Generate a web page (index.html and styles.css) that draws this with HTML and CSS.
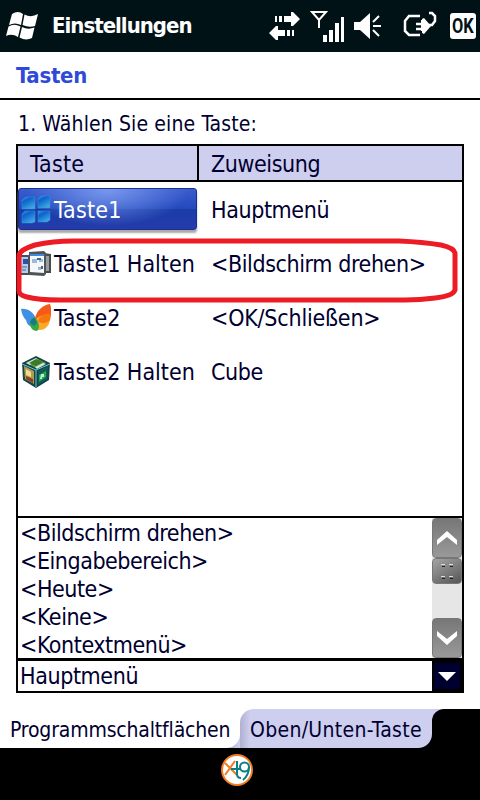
FILE: index.html
```html
<!DOCTYPE html>
<html lang="de">
<head>
  <meta charset="UTF-8" />
  <title>Einstellungen</title>
  <link rel="stylesheet" href="styles.css">
</head>
<body>

  <header class="titlebar">
    <svg class="logo" width="34" height="30" viewBox="0 0 34 30">
      <g fill="#fff">
        <path d="M6 3 Q12 -1 17 3 L15 14 Q9 11 3 14 Z" />
        <path d="M18.500 3.500 Q25 7 32 3 L29 15 Q23 17 16.500 14 Z" />
        <path d="M2.500 15.500 Q8 12 14.500 15.500 L12 26 Q6 22 0 25 Z" />
        <path d="M16 16 Q22 19 28.500 16.500 L26 27 Q20 30 13.500 26.500 Z" />
      </g>
    </svg>
    <h1>Einstellungen</h1>
    <svg class="status" width="222" height="34" viewBox="0 1 222 34">
      <!-- Datenverbindung -->
      <g fill="#fff">
        <path d="M17 8h2v6h-2zM21 8h3v6h-3zM26 8h7V4h2l7 7-7 7h-2v-4h-7z" />
        <path d="M34 22h2v6h-2zM29 22h3v6h-3zM27 22h-7v-4h-2l-7 7 7 7h2v-4h7z" />
      </g>
      <!-- Empfang -->
      <path d="M54 4h14l-7 8zM61 11v9" fill="none" stroke="#fff" stroke-width="2" />
      <path d="M65 27h4v7h-4zM71 22h4v12h-4zM77 15h4v19h-4zM83 9h3v25h-3z" fill="#fff" />
      <!-- Lautsprecher -->
      <path d="M96 14h6l10-9v26l-10-9h-6z" fill="#fff" />
      <path d="M115 14l6-6M115 18h8M115 22l6 6" fill="none" stroke="#fff" stroke-width="2" />
      <!-- Netzteil -->
      <path d="M162 8h-11l-4 5v10l4 4h11M158 16h6M158 21h6M171 5h3l3 3v5l-3 4h-3" fill="none" stroke="#fff" stroke-width="2.500" />
      <path d="M163 12h1v-1l2-1 7 8-7 8-2-1v-2h-1z" fill="#fff" />
    </svg>
    <button class="ok"><span>OK</span></button>
  </header>

  <h2>Tasten</h2>

  <main>
    <p class="step">1. Wählen Sie eine Taste:</p>

    <div class="panel">
      <div class="row head"><span>Taste</span><span>Zuweisung</span></div>
      <div class="list">
        <div class="row">
          <div class="key selected">
            <svg width="30" height="30" viewBox="0 0 30 30">
              <defs>
                <linearGradient id="tile" x1="0" y1="0" x2="0.6" y2="1">
                  <stop offset="0" stop-color="#3a98e6" />
                  <stop offset="0.35" stop-color="#0a62cc" />
                  <stop offset="1" stop-color="#3fa6e0" />
                </linearGradient>
              </defs>
              <g fill="url(#tile)" stroke="#3a93e0" stroke-width=".5">
                <path d="M5 2h9v12H1V5z" /><path d="M20 1h9v12H17V4z" />
                <path d="M4 16h10v11l-3 1H1v-9z" /><path d="M17 16h12v9l-3 2h-9z" />
              </g>
            </svg>
            <span>Taste1</span>
          </div>
          <div class="value">Hauptmenü</div>
        </div>
        <div class="row">
          <div class="key">
            <svg width="30" height="30" viewBox="0 0 30 30">
              <path d="M0 6h8v20H0z" fill="#4b5054" />
              <path d="M0 8h7v16H0z" fill="#b8cbe6" />
              <path d="M2 10h5v5H2z" fill="#2854b0" />
              <path d="M1 18h5M1 21h4" stroke="#456ba8" />
              <path d="M23 4l7 1v19h-7z" fill="#484b4e" />
              <path d="M24 7h4v15h-4z" fill="#9a9da0" />
              <path d="M8 3l15-1 2 2v21l-2 2-15-1z" fill="#505356" />
              <path d="M9 5h14v19l-14-1z" fill="#f4f8fc" />
              <path d="M9 5h14v2H9z" fill="#3e88df" />
              <path d="M11 10h5v4h-5zM18 10h4v3h-4zM17 18h3v3h-3z" fill="#9dbbd8" />
              <path d="M16 9h4v2h-4zM20 17h2v3h-2z" fill="#3a6691" />
              <path d="M18 18h2v1h-2z" fill="#e89030" />
            </svg>
            <span>Taste1 Halten</span>
          </div>
          <div class="value">&lt;Bildschirm drehen&gt;</div>
        </div>
        <div class="row">
          <div class="key">
            <svg width="30" height="30" viewBox="0 0 30 30">
              <path d="M0 6C6 5 13 9 15 16L13 24C8 24 6 21 5 17 2 14 1 11 0 6z" fill="#3f8fe2" />
              <path d="M14 15C16 7 22 2 29 1 31 6 30 13 29 17 23 22 18 19 14 15z" fill="#f4581a" />
              <path d="M14 17C18 12 25 11 29 13 30 21 25 28 17 27z" fill="#fba929" />
              <path d="M17 18C19 12 25 10 29 11L29 17C25 21 20 21 17 18z" fill="#f9760f" />
              <path d="M9 20C10 15 13 13 16 17 19 22 18 26 16 28 12 28 9 25 9 20z" fill="#35a948" />
              <path d="M9 20Q10 15 14 15L16 20 13 23z" fill="#187a83" />
            </svg>
            <span>Taste2</span>
          </div>
          <div class="value wide">&lt;OK/Schließen&gt;</div>
        </div>
        <div class="row">
          <div class="key">
            <svg width="30" height="32" viewBox="0 0 30 32">
              <path d="M15 0l14 7-1 17-13 8L2 24 1 7z" fill="#14434c" />
              <path d="M15 2l10 5-10 5L5 7z" fill="#5d9c38" />
              <path d="M5 7l10-5 2 2-8 5zM14 11l8-4 3 1-9 5z" fill="#d7e6d2" />
              <path d="M8 7l7-4 7 3-7 4z" fill="#397b29" />
              <path d="M3 10l10 5v13L4 23z" fill="#b49b49" />
              <path d="M5 13l5 3v5l-5-2z" fill="#eedc92" />
              <path d="M5 20l7 3v4l-7-4z" fill="#864125" />
              <path d="M17 15l10-5-1 13-9 6z" fill="#105c51" />
              <path d="M18 19l7-4v6l-7 5z" fill="#27a55a" />
              <path d="M20 18h3v3h-2v2h-2z" fill="#b8f5ca" />
              <path d="M1 8l14 6 14-6M15 14v17" fill="none" stroke="#63cbd2" />
            </svg>
            <span>Taste2 Halten</span>
          </div>
          <div class="value">Cube</div>
        </div>
        <svg class="marker" width="444" height="70" viewBox="0 0 444 70">
          <path d="M4 20Q4 14 20 9 38 5 58 5H384Q408 6 426 9 439 12 440 17V54Q438 60 420 62 405 64 390 64H45Q23 64 12 61 4 59 4 55Z" />
        </svg>
      </div>

      <div class="options">
        <ul>
          <li>&lt;Bildschirm drehen&gt;</li>
          <li>&lt;Eingabebereich&gt;</li>
          <li>&lt;Heute&gt;</li>
          <li>&lt;Keine&gt;</li>
          <li>&lt;Kontextmenü&gt;</li>
        </ul>
        <div class="scrollbar">
          <div class="arrow">
            <svg width="20" height="14" viewBox="0 0 20 14"><path d="M0 14V9L10 0l10 9v5L10 6z" /></svg>
          </div>
          <div class="thumb">
            <svg width="12" height="18" viewBox="0 0 12 18">
              <path d="M0 2.500h4M8 2.500h4M0 14.500h4M8 14.500h4" stroke="#ddd" />
              <path d="M1 4.500h3M9 4.500h3M1 16.500h3M9 16.500h3" stroke="#222" />
            </svg>
          </div>
          <div class="arrow down">
            <svg width="20" height="14" viewBox="0 0 20 14"><path d="M0 0v5l10 9 10-9V0L10 8z" /></svg>
          </div>
        </div>
      </div>

      <div class="select">
        <span>Hauptmenü</span>
        <div class="drop"><svg width="18" height="9" viewBox="0 0 18 9"><path d="M0 0h18L9 9z" fill="#fff" /></svg></div>
      </div>
    </div>
  </main>

  <nav class="tabs">
    <div class="tab active">Programmschaltflächen</div>
    <div class="tab">Oben/Unten-Taste</div>
    <div class="rest"></div>
  </nav>

  <footer>
    <svg width="34" height="34" viewBox="0 0 34 34">
      <circle cx="17" cy="17" r="15" fill="#fff" stroke="#f47b20" stroke-width="2" />
      <path d="M5 10l12 12M15 8L5 22" stroke="#f47b20" stroke-width="2" fill="none" />
      <path d="M17 8v13q0 4 4 4M11 16h9" stroke="#087f86" stroke-width="2" fill="none" />
      <circle cx="24.500" cy="14" r="4.500" stroke="#087f86" stroke-width="2" fill="none" />
      <path d="M29 14q0 8-6 13" stroke="#087f86" stroke-width="2" fill="none" />
    </svg>
  </footer>

</body>
</html>
```
FILE: styles.css
```css
* { box-sizing: border-box; }

body {
  margin: 0;
  width: 480px;
  height: 800px;
  overflow: hidden;
  display: flex;
  flex-direction: column;
  background: #fff;
  color: #000030;
  font-family: 'DejaVu Sans Condensed', 'DejaVu Sans', sans-serif;
  font-stretch: condensed;
  font-size: 23px;
}

h1, h2, p, ul { margin: 0; padding: 0; }

.titlebar {
  height: 52px;
  flex: none;
  display: flex;
  align-items: center;
  padding-left: 6px;
  background: #001216;
  color: #fff;
}

h1 {
  width: 184px;
  margin-left: 12px;
  margin-top: -2px;
  font-size: 22px;
  letter-spacing: -1px;
}

.status {
  margin-left: 22px;
  flex: none;
}

.ok {
  width: 26px;
  height: 26px;
  flex: none;
  display: flex;
  align-items: center;
  justify-content: center;
  margin-left: -30px;
  padding: 0;
  border: 0;
  border-radius: 3px;
  background: #fff;
  color: #001216;
  font: bold 21px/26px Roboto, sans-serif;
}

.ok span { transform: scaleX(.78); }

h2 {
  height: 48px;
  flex: none;
  padding-left: 16px;
  border-bottom: 2px solid #000;
  color: #2f49d8;
  font-size: 22px;
  line-height: 47px;
  letter-spacing: -0.3px;
}

main { height: 610px; flex: none; padding: 0 16px; }

.step {
  height: 44px;
  padding-left: 2px;
  font-size: 21px;
  line-height: 48px;
  letter-spacing: 0.12px;
}

.panel {
  height: 549px;
  border: 2px solid #000;
  display: flex;
  flex-direction: column;
}

.row {
  display: grid;
  grid-template-columns: 181px 1fr;
  height: 54px;
  align-items: center;
}

.head {
  height: 36px;
  flex: none;
  background: #ceceee;
  border-bottom: 2px solid #000;
  letter-spacing: -0.4px;
}

.head span { height: 34px; padding-left: 12px; line-height: 36px; }
.head span:first-child { border-right: 2px solid #000; letter-spacing: 0.2px; }

.list { position: relative; height: 334px; flex: none; padding-top: 1px; }

.key {
  display: flex;
  align-items: center;
  height: 42px;
  gap: 3px;
  padding-left: 3px;
  white-space: nowrap;
}

.key svg { flex: none; }

.selected {
  width: 179px;
  margin-bottom: 2px;
  border: 1px solid #173091;
  border-radius: 3px;
  padding: 2px 0 0 2px;
  background: radial-gradient(ellipse at 50% 0, #7898ed, transparent 65%), linear-gradient(#3a5ccc, #2349bd 50%, #193da8 51%, #263bab);
  box-shadow: 0 3px 2px #aaa;
  color: #fff;
  letter-spacing: 0.2px;
}

.value { padding-left: 12px; white-space: nowrap; letter-spacing: -0.4px; }

.wide { letter-spacing: -0.2px; }

.marker { position: absolute; left: -3px; top: 54px; }

.marker path { fill: none; stroke: #ed1c24; stroke-width: 5; }

.options {
  height: 142px;
  flex: none;
  display: flex;
  justify-content: space-between;
  border-top: 2px solid #000;
  letter-spacing: -0.45px;
}

ul { list-style: none; padding-left: 2px; }

li { height: 28px; line-height: 31px; }

.scrollbar {
  width: 30px;
  display: flex;
  flex-direction: column;
  background: #e6e6e6;
}

.arrow, .thumb {
  height: 40px;
  flex: none;
  display: flex;
  align-items: center;
  justify-content: center;
  border: 1px solid #777;
  border-radius: 4px;
  background: linear-gradient(#777, #999);
}

.arrow path { fill: #fff; }
.thumb { height: 26px; background: linear-gradient(150deg, #a5a5a5, #555); }
.down { margin-top: auto; }

.select {
  height: 33px;
  flex: none;
  display: flex;
  justify-content: space-between;
  border-top: 3px solid #000;
  padding-left: 2px;
  line-height: 31px;
  letter-spacing: -0.4px;
}

.drop {
  width: 30px;
  display: flex;
  align-items: center;
  justify-content: center;
  border: 2px solid #000;
  background: #000030;
}

/* the stripes show through behind the rounded tab corners */
.tabs {
  height: 39px;
  flex: none;
  display: flex;
  margin-top: -1px;
  background: linear-gradient(90deg, #a8a8cc 225px, #ceceee 240px, #fff 240px 300px, #000 300px 432px, #ceceee 432px);
  font-size: 21px;
  line-height: 42px;
  white-space: nowrap;
}

.tab {
  width: 192px;
  padding-left: 10px;
  background: linear-gradient(90deg, #b0b0d0, #ceceee 10px);
  border-radius: 14px 0 14px 0;
  letter-spacing: 0.3px;
}

.active {
  width: 240px;
  background: #fff;
  border-radius: 0 0 14px 0;
  letter-spacing: -0.17px;
}

.rest { flex: 1; background: #000; border-radius: 12px 0 0 0; }

footer {
  flex: 1;
  display: flex;
  justify-content: center;
  padding: 5px 6px 0 0;
  background: #000;
}
```
